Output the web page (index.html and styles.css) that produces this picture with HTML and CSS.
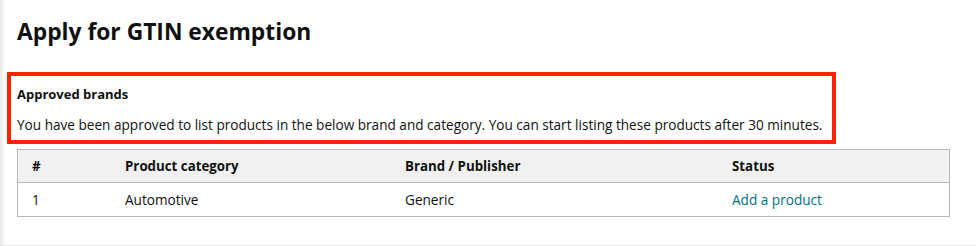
FILE: index.html
```html
<!DOCTYPE html>
<html lang="en">
<head>
  <meta charset="UTF-8">
  <title>Apply for GTIN exemption</title>
  <link rel="stylesheet" href="styles.css">
</head>
<body>
  <div class="page">
    <h1>Apply for GTIN exemption</h1>

    <div class="notice">
      <h2>Approved brands</h2>
      <p>You have been approved to list products in the below brand and category. You can start listing these products after 30 minutes.</p>
    </div>

    <table class="brands">
      <thead>
        <tr>
          <th class="col-num">#</th>
          <th class="col-cat">Product category</th>
          <th class="col-brand">Brand / Publisher</th>
          <th>Status</th>
        </tr>
      </thead>
      <tbody>
        <tr>
          <td>1</td>
          <td>Automotive</td>
          <td>Generic</td>
          <td><a href="#">Add a product</a></td>
        </tr>
      </tbody>
    </table>
  </div>
</body>
</html>
```

FILE: styles.css
```css
body {
  margin: 0;
  font-family: "Open Sans", "Liberation Sans", sans-serif;
  color: #0f1111;
  background: linear-gradient(to right, #e9e9e9, #fff 6px);
}

.page {
  height: 246px;
  box-sizing: border-box;
  padding: 17px 26px 0 17px;
  border-bottom: 1px solid #e5e5e5;
}

h1 {
  margin: 0 0 25px 0;
  font-size: 22.8px;
  line-height: 30px;
  font-weight: 700;
}

.notice {
  width: fit-content;
  height: 57px;
  margin-left: -10px;
  padding: 7px 10px 0 6px;
  border: 4px solid #ff2200;
}

.notice h2 {
  margin: 0;
  font-size: 13px;
  line-height: 22px;
  font-weight: 700;
}

.notice p {
  margin: 10px 0 0 0;
  font-size: 13.6px;
  line-height: 20px;
}

.brands {
  width: 933px;
  margin-top: 5px;
  border-collapse: collapse;
  border: 1px solid #b8b8b8;
  font-size: 13.6px;
}

.brands th,
.brands td {
  height: 33px;
  padding: 0 14px;
  text-align: left;
}

.brands th {
  height: 32px;
  background-color: #f0f1f0;
  border-bottom: 1px solid #b8b8b8;
  font-size: 13.3px;
  font-weight: 700;
}

.col-num { width: 65px; }
.col-cat { width: 252px; }
.col-brand { width: 299px; }

.brands a {
  color: #007185;
  text-decoration: none;
}
```
